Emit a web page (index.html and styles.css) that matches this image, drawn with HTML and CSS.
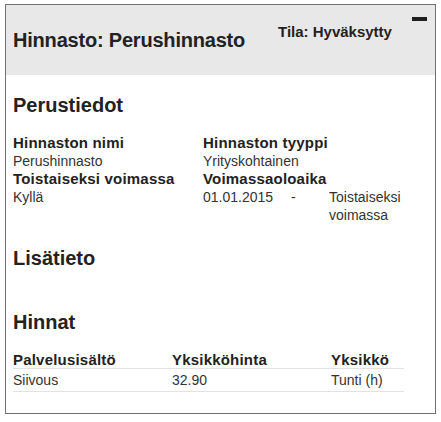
FILE: index.html
```html
<!DOCTYPE html>
<html lang="fi">
<head>
  <meta charset="UTF-8">
  <meta name="viewport" content="width=device-width,initial-scale=1"/>
  <title>Hinnasto</title>
  <link rel="stylesheet" href="styles.css">
</head>
<body>
  <div class="paneeli">
    <div class="otsake">
      <h1>Hinnasto: Perushinnasto</h1>
      <span class="tila">Tila: Hyväksytty</span>
      <span class="pienenna" title="Pienennä"></span>
    </div>

    <div class="sisalto">
      <h2>Perustiedot</h2>
      <div class="tiedot">
        <div>
          <h3>Hinnaston nimi</h3>
          <p>Perushinnasto</p>
        </div>
        <div>
          <h3>Hinnaston tyyppi</h3>
          <p>Yrityskohtainen</p>
        </div>
        <div>
          <h3>Toistaiseksi voimassa</h3>
          <p>Kyllä</p>
        </div>
        <div>
          <h3>Voimassaoloaika</h3>
          <div class="aika">
            <p>01.01.2015</p>
            <p>-</p>
            <p>Toistaiseksi voimassa</p>
          </div>
        </div>
      </div>

      <h2 class="lisa">Lisätieto</h2>

      <h2 class="hinnat">Hinnat</h2>
      <table>
        <thead>
          <tr>
            <th class="k1">Palvelusisältö</th>
            <th class="k2">Yksikköhinta</th>
            <th>Yksikkö</th>
          </tr>
        </thead>
        <tbody>
          <tr>
            <td>Siivous</td>
            <td>32.90</td>
            <td>Tunti (h)</td>
          </tr>
        </tbody>
      </table>
    </div>
  </div>
</body>
</html>
```

FILE: styles.css
```css
*{
  margin: 0; padding: 0;
  box-sizing: border-box;
}
body{
  font-family: "Liberation Sans", Arial, sans-serif;
  color: #222;
  background: #fff;
}
.paneeli{
  margin: 4px 0 0 5px;
  width: 431px;
  height: 410px;
  border: 1px solid #707070;
}
.otsake{
  height: 70px;
  background: #e8e8e8;
  display: flex;
  align-items: flex-start;
  padding-left: 7px;
}
h1{
  font-size: 20px;
  line-height: 24px;
  margin-top: 23px;
  width: 265px;
  letter-spacing: -0.2px;
}
.tila{
  font-size: 15px;
  font-weight: bold;
  line-height: 18px;
  margin-top: 18px;
  width: 134px;
}
.pienenna{
  width: 15px;
  height: 4px;
  margin-top: 12px;
  background: #1e1e1e;
}
.sisalto{
  padding: 18px 7px 0 7px;
}
h2{
  font-size: 20px;
  line-height: 24px;
}
.tiedot{
  display: grid;
  grid-template-columns: 190px 200px;
  margin-top: 17px;
}
h3{
  font-size: 15px;
  line-height: 18px;
  letter-spacing: 0.2px;
}
p{
  font-size: 14px;
  line-height: 18px;
  color: #333;
}
.aika{
  display: grid;
  grid-template-columns: 88px 38px 75px;
}
.lisa{
  margin-top: 22px;
}
.hinnat{
  margin-top: 40px;
}
table{
  width: 391px;
  margin-top: 17px;
  border-collapse: collapse;
}
th{
  font-size: 15px;
  line-height: 17px;
  text-align: left;
  letter-spacing: 0.2px;
  border-bottom: 1px solid #e2e2e2;
}
td{
  font-size: 14px;
  line-height: 22px;
  color: #333;
  border-bottom: 1px solid #e2e2e2;
}
.k1, .k2{
  width: 159px;
}
```
